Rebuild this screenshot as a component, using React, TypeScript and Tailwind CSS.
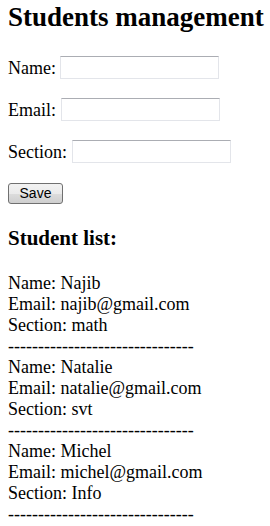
const students = [
  { name: "Najib", email: "najib@gmail.com", section: "math" },
  { name: "Natalie", email: "natalie@gmail.com", section: "svt" },
  { name: "Michel", email: "michel@gmail.com", section: "Info" },
];

const Field = ({ label }: { label: string }) => (
  <div className="flex items-center h-[23px]">
    <label className="leading-none whitespace-pre">{label} </label>
    <input
      type="text"
      className="w-[159px] h-[23px] bg-white border border-[#e3e5ea] border-t-[#abadb3] outline-none"
    />
  </div>
);

export default function App() {
  return (
    <div className="min-h-screen bg-white text-black px-2 text-[18px] font-['Liberation_Serif',serif] overflow-hidden">
      <h2 className="pt-[2px] text-[27px] leading-[31px] font-bold whitespace-nowrap">Students management</h2>

      <div className="mt-[23px] flex flex-col gap-[19px]">
        <Field label="Name:" />
        <Field label="Email:" />
        <Field label="Section:" />
      </div>

      <button
        type="button"
        className="mt-[20px] w-[55px] h-[21px] flex items-center justify-center rounded-[3px] border border-[#707070] bg-[linear-gradient(180deg,#f2f2f2_0%,#ebebeb_50%,#dddddd_51%,#cfcfcf_100%)] text-[14px] font-['Liberation_Sans',sans-serif] text-black"
      >
        Save
      </button>

      <h3 className="mt-[22px] text-[21px] leading-[24px] font-bold">Student list:</h3>

      <div className="mt-[23px] leading-[21px]">
        {students.map((s) => (
          <div key={s.name}>
            <div>Name: {s.name}</div>
            <div>Email: {s.email}</div>
            <div>Section: {s.section}</div>
            <div>-------------------------------</div>
          </div>
        ))}
      </div>
    </div>
  );
}
